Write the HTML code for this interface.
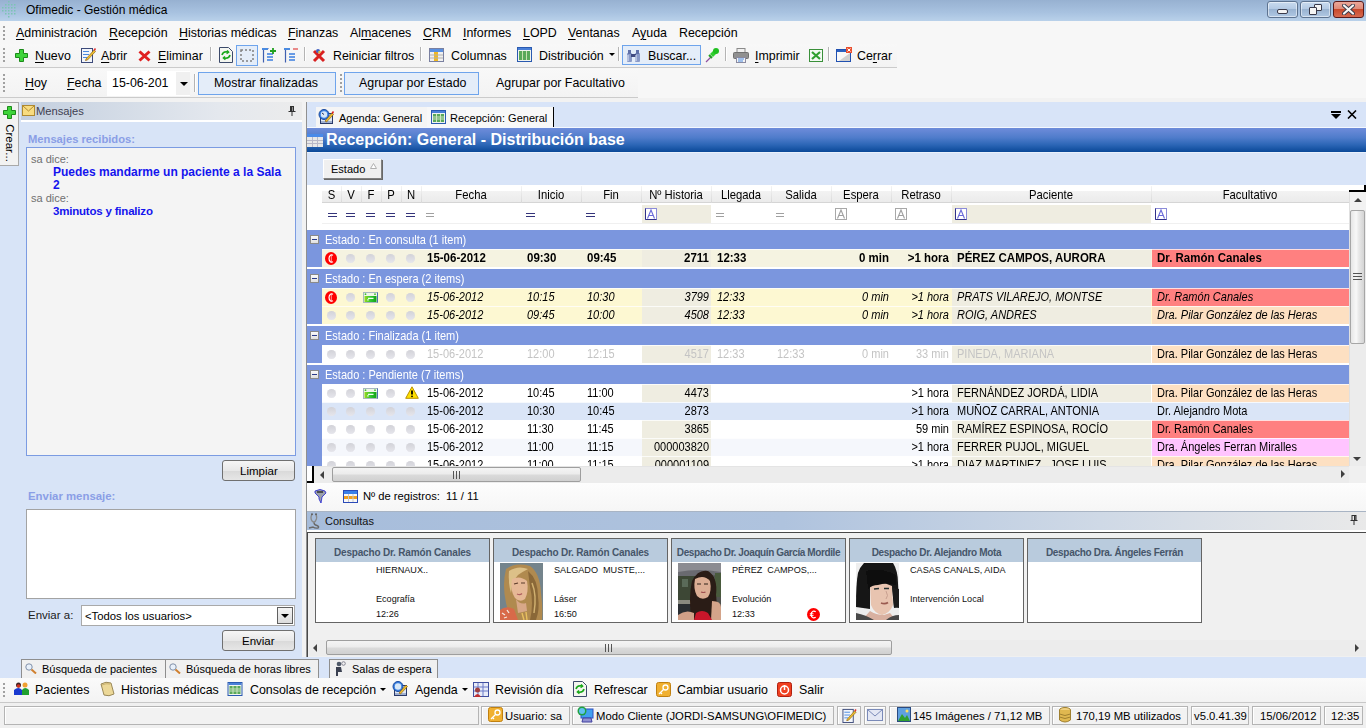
<!DOCTYPE html>
<html><head><meta charset="utf-8">
<style>
*{margin:0;padding:0;box-sizing:border-box}
html,body{width:1366px;height:728px;overflow:hidden;background:#f0f0f0;font-family:"Liberation Sans",sans-serif;font-size:12px;color:#000}
.a{position:absolute}
.t{position:absolute;white-space:nowrap;line-height:14px}
u{text-decoration:underline;text-underline-offset:2px;text-decoration-thickness:1px}
.sep{position:absolute;width:2px;background:linear-gradient(90deg,#b4b4b4 50%,#fff 50%)}
.grip{position:absolute;width:2px;background:repeating-linear-gradient(#a0a0a0 0 2px,transparent 2px 4px)}
.hd{font-size:11.3px;text-align:center;color:#000}
.dot{width:9px;height:9px;border-radius:50%;background:linear-gradient(#d2d2d8,#dcdce2 50%,#e6e6ec);box-shadow:0 0 .6px #dedee4}
.mbox{width:9px;height:9px;background:linear-gradient(#fafafa,#e0e0e0);border:1px solid #8a8a8a}
.mbox:after{content:"";position:absolute;left:1px;top:3px;width:5px;height:1px;background:#2a3a8a}
.grp{font-size:11px;color:#fff}
.rb{font-size:11.5px;font-weight:bold}
.ri{font-size:11px;font-style:italic}
.rg{font-size:11px;color:#c4c4c4}
.rn{font-size:11px}
.ctitle{font-size:10px;font-weight:bold;color:#46566a;letter-spacing:-.15px}
.ctext{font-size:9.1px;color:#101010}
.rn,.ri,.rg,.grp,.hd{transform:scaleY(1.1);transform-origin:0 10.6px}
.rb{transform:scaleY(1.04);transform-origin:0 10.8px}
</style></head>
<body>
<!-- TITLE BAR -->
<div class="a" style="left:0;top:0;width:1366px;height:21px;background:linear-gradient(#97b1d1,#a8c2e0 60%,#b9d1ea)"></div>
<svg class="a" style="left:2px;top:1px" width="16" height="17" viewBox="0 0 16 17"><g fill="#7cc4b4"><rect x="6" y="0" width="1.5" height="1.5"/><rect x="6" y="3" width="1.5" height="1.5"/><rect x="6" y="6" width="1.5" height="1.5"/><rect x="6" y="9" width="1.5" height="1.5"/><rect x="6" y="12" width="1.5" height="1.5"/><rect x="6" y="15" width="1.5" height="1.5"/><rect x="9" y="3" width="1.5" height="1.5"/><rect x="9" y="6" width="1.5" height="1.5"/><rect x="9" y="9" width="1.5" height="1.5"/><rect x="9" y="12" width="1.5" height="1.5"/><rect x="0" y="6" width="1.5" height="1.5"/><rect x="3" y="6" width="1.5" height="1.5"/><rect x="12" y="6" width="1.5" height="1.5"/><rect x="0" y="9" width="1.5" height="1.5"/><rect x="3" y="9" width="1.5" height="1.5"/><rect x="12" y="9" width="1.5" height="1.5"/><rect x="3" y="3" width="1.5" height="1.5"/><rect x="3" y="12" width="1.5" height="1.5"/><rect x="12" y="3" width="1.5" height="1.5"/><rect x="12" y="12" width="1.5" height="1.5"/></g></svg>
<div class="t" style="left:26px;top:3px;font-size:12px;color:#000">Ofimedic - Gestión médica</div>
<div class="a" style="left:1267px;top:1px;width:31px;height:17px;border:1px solid #5d7390;border-radius:3px;background:linear-gradient(#c9dbef 0,#b4cae4 45%,#98b2d0 46%,#b0c8e4 100%);box-shadow:inset 0 0 0 1px rgba(255,255,255,.5)"></div>
<div class="a" style="left:1277px;top:9px;width:11px;height:5px;background:#f4f4f4;border:1px solid #3a3a4a;border-radius:2px"></div>
<div class="a" style="left:1300px;top:1px;width:31px;height:17px;border:1px solid #5d7390;border-radius:3px;background:linear-gradient(#c9dbef 0,#b4cae4 45%,#98b2d0 46%,#b0c8e4 100%);box-shadow:inset 0 0 0 1px rgba(255,255,255,.5)"></div>
<div class="a" style="left:1314px;top:4px;width:8px;height:7px;background:#f4f4f4;border:1.5px solid #3a3a4a;border-radius:1px"></div>
<div class="a" style="left:1309px;top:7px;width:8px;height:8px;background:#f4f4f4;border:1.5px solid #3a3a4a;border-radius:1px"></div>
<div class="a" style="left:1333px;top:1px;width:31px;height:17px;border:1px solid #5a1a1a;border-radius:3px;background:linear-gradient(#eba79a 0,#df8a78 45%,#c8472a 46%,#d66a50 100%)"></div>
<svg class="a" style="left:1342px;top:4px" width="13" height="11" viewBox="0 0 13 11"><path d="M2 1.5 L11 9.5 M11 1.5 L2 9.5" stroke="#3a3a4a" stroke-width="4" stroke-linecap="round"/><path d="M2 1.5 L11 9.5 M11 1.5 L2 9.5" stroke="#f6f6f6" stroke-width="2.2" stroke-linecap="round"/></svg>
<!-- MENU BAR -->
<div class="a" style="left:0;top:21px;width:1366px;height:23px;background:#f7f7f7"></div>
<div class="grip" style="left:3px;top:26px;height:14px"></div>
<div style="position:absolute;left:0;top:26px;font-size:12.4px;white-space:nowrap;line-height:15px">
<span class="t" style="left:16px"><u>A</u>dministración</span>
<span class="t" style="left:109px"><u>R</u>ecepción</span>
<span class="t" style="left:179px"><u>H</u>istorias médicas</span>
<span class="t" style="left:288px"><u>F</u>inanzas</span>
<span class="t" style="left:350px">Al<u>m</u>acenes</span>
<span class="t" style="left:423px"><u>C</u>RM</span>
<span class="t" style="left:463px"><u>I</u>nformes</span>
<span class="t" style="left:523px"><u>L</u>OPD</span>
<span class="t" style="left:568px"><u>V</u>entanas</span>
<span class="t" style="left:632px">A<u>y</u>uda</span>
<span class="t" style="left:679px">Recepción</span>
</div>
<!-- TOOLBAR 1 -->
<div class="a" style="left:0;top:44px;width:1366px;height:54px;background:#f7f7f7"></div>
<div class="a" style="left:0;top:44px;width:897px;height:24px;background:linear-gradient(#f8f8f8,#f3f3f3);border-bottom:1px solid #cbcbcb"></div>
<div class="grip" style="left:3px;top:48px;height:14px"></div>
<div style="position:absolute;left:0;top:49px;font-size:12.4px;line-height:15px">
<span class="t" style="left:35px"><u>N</u>uevo</span>
<span class="t" style="left:101px"><u>A</u>brir</span>
<span class="t" style="left:158px"><u>E</u>liminar</span>
<span class="t" style="left:333px">Reiniciar filtros</span>
<span class="t" style="left:451px">Columnas</span>
<span class="t" style="left:539px">Distribución</span>
<span class="t" style="left:648px">Buscar...</span>
<span class="t" style="left:755px"><u>I</u>mprimir</span>
<span class="t" style="left:857px">Ce<u>r</u>rar</span>
</div>
<svg class="a" style="left:15px;top:49px" width="13" height="13" viewBox="0 0 13 13"><path d="M4.5 .5h4v4h4v4h-4v4h-4v-4h-4v-4h4z" fill="#3ed43a" stroke="#1c8a1a"/></svg>
<svg class="a" style="left:81px;top:47px" width="15" height="16" viewBox="0 0 15 16"><rect x=".5" y="1.5" width="11" height="14" fill="#f2f5fa" stroke="#3c4a7a"/><path d="M2 4.5h6M2 7.5h6M2 10.5h4" stroke="#4a8ae0"/><path d="M5 12 L13 3 L14.5 4.5 L6.5 13 L4.5 13.5z" fill="#f0c030" stroke="#8a6010" stroke-width=".7"/><path d="M12.5 2.5 L14 1 L15 2 L14 4z" fill="#e03030"/></svg>
<svg class="a" style="left:138px;top:50px" width="13" height="12" viewBox="0 0 13 12"><path d="M1.5 1.5 L11.5 10.5 M11.5 1.5 L1.5 10.5" stroke="#e02020" stroke-width="3"/></svg>
<div class="sep" style="left:210px;top:47px;height:14px"></div>
<svg class="a" style="left:219px;top:47px" width="14" height="16" viewBox="0 0 14 16"><path d="M.5 .5h9l4 4v11h-13z" fill="#f4f6f0" stroke="#3c4a6a"/><path d="M3 8 Q4 4 9 5 M8 3.5 L9.5 5.2 L7.5 6.5" stroke="#18a818" stroke-width="1.6" fill="none"/><path d="M11 8 Q10 12 5 11 M6 9.5 L4.5 11 L6.5 12.5" stroke="#18a818" stroke-width="1.6" fill="none"/></svg>
<div class="a" style="left:236px;top:45px;width:22px;height:21px;background:#e4edf9;border:1px solid #6ea4ec"></div>
<svg class="a" style="left:240px;top:49px" width="14" height="13" viewBox="0 0 14 13"><path d="M1 1h12v11h-12z" fill="none" stroke="#808080" stroke-width="1.5" stroke-dasharray="2 2"/></svg>
<svg class="a" style="left:262px;top:47px" width="15" height="16" viewBox="0 0 15 16"><path d="M.5 1.5h6M1.5 1.5v14" stroke="#4060b0" stroke-width="1.2"/><rect x="0" y="1" width="6" height="2" fill="#4a8ae0"/><path d="M5 7h6M5 10h6M5 13h6" stroke="#3a7ee0" stroke-width="1.5"/><path d="M11 1v6M8 4h6" stroke="#20a020" stroke-width="1.8"/></svg>
<svg class="a" style="left:284px;top:47px" width="15" height="16" viewBox="0 0 15 16"><path d="M1.5 1.5v14" stroke="#4060b0" stroke-width="1.2"/><rect x="0" y="1" width="6" height="2" fill="#4a8ae0"/><path d="M5 7h6M5 10h6M5 13h6" stroke="#3a7ee0" stroke-width="1.5"/><path d="M9 2h5" stroke="#e04040" stroke-width="1.2"/></svg>
<div class="sep" style="left:304px;top:47px;height:14px"></div>
<svg class="a" style="left:312px;top:48px" width="14" height="15" viewBox="0 0 14 15"><path d="M2 3 L12 13 M12 3 L2 13" stroke="#d82020" stroke-width="3"/><circle cx="6" cy="3" r="2" fill="#4060c0"/><circle cx="7.5" cy="4" r="1.3" fill="#e0c040"/></svg>
<div class="sep" style="left:420px;top:47px;height:14px"></div>
<svg class="a" style="left:429px;top:48px" width="15" height="14" viewBox="0 0 15 14"><rect x=".5" y=".5" width="14" height="13" fill="#f0f0f0" stroke="#7a80a0"/><rect x="1" y="1" width="13" height="3" fill="#5a90e0"/><rect x="5" y="4" width="4" height="9" fill="#f0b820"/><path d="M1 7h13M1 10h13" stroke="#b0b0b0"/></svg>
<svg class="a" style="left:517px;top:47px" width="15" height="15" viewBox="0 0 15 15"><rect x=".5" y=".5" width="14" height="14" fill="#f0f4f0" stroke="#2a5ab0"/><rect x="1" y="1" width="13" height="2" fill="#4a80d8"/><rect x="2" y="4" width="11" height="9" fill="#5aa85a"/><path d="M5.5 4v9M9.5 4v9" stroke="#c8e0b0"/></svg>
<div class="a" style="left:609px;top:53px;width:0;height:0;border-left:3px solid transparent;border-right:3px solid transparent;border-top:3px solid #000"></div>
<div class="sep" style="left:618px;top:47px;height:14px"></div>
<div class="a" style="left:622px;top:45px;width:79px;height:20px;background:#e4edf9;border:1px solid #6ea4ec"></div>
<span class="t" style="left:648px;top:49px;font-size:12.4px;line-height:15px">Buscar...</span>
<svg class="a" style="left:626px;top:49px" width="15" height="13" viewBox="0 0 15 13"><rect x="1" y="4" width="5" height="9" rx="1" fill="#8a9ac8"/><rect x="9" y="4" width="5" height="9" rx="1" fill="#8a9ac8"/><rect x="2" y="1" width="3" height="4" fill="#6070a8"/><rect x="10" y="1" width="3" height="4" fill="#6070a8"/><rect x="5" y="5" width="5" height="3" fill="#404a80"/><path d="M2 6v6M10 6v6" stroke="#e0e8f8"/></svg>
<svg class="a" style="left:705px;top:47px" width="15" height="16" viewBox="0 0 15 16"><path d="M1 15 L6 10" stroke="#9050a0" stroke-width="1.2"/><path d="M5 7 L10 2 L13 5 L8 10z" fill="#30d030"/><circle cx="11" cy="4" r="3" fill="#20c020"/><path d="M4 8 L7 11" stroke="#20a020" stroke-width="2"/></svg>
<div class="sep" style="left:725px;top:47px;height:14px"></div>
<svg class="a" style="left:733px;top:48px" width="16" height="15" viewBox="0 0 16 15"><rect x="4" y=".5" width="8" height="4" fill="#f0f0f0" stroke="#8a8a8a"/><rect x=".5" y="4.5" width="15" height="6" rx="1" fill="#909090" stroke="#707070"/><rect x="3.5" y="9.5" width="9" height="5" fill="#f4f4f4" stroke="#8a8aa0"/><path d="M5 11h6M5 13h5" stroke="#4a8ae0"/></svg>
<svg class="a" style="left:809px;top:49px" width="14" height="13" viewBox="0 0 14 13"><rect x=".5" y=".5" width="13" height="12" fill="#f4faf4" stroke="#3a903a"/><path d="M3 3 L11 10 M11 3 L3 10" stroke="#30a030" stroke-width="2.2"/></svg>
<div class="sep" style="left:828px;top:47px;height:14px"></div>
<svg class="a" style="left:836px;top:47px" width="16" height="15" viewBox="0 0 16 15"><rect x=".5" y="2.5" width="14" height="12" fill="#f8f8f8" stroke="#2050b0"/><rect x="1" y="3" width="13" height="2" fill="#2a60c0"/><path d="M14 14 L3 14 L14 6z" fill="#d0d0d0"/><rect x="10" y="0" width="6" height="6" fill="#e85030"/><path d="M11.5 1.5l3 3M14.5 1.5l-3 3" stroke="#fff"/></svg>

<!-- TOOLBAR 2 -->
<div class="a" style="left:0;top:69px;width:638px;height:29px;background:linear-gradient(#f8f8f8,#f3f3f3);border-bottom:1px solid #cbcbcb"></div>
<div class="grip" style="left:3px;top:74px;height:18px"></div>
<div style="position:absolute;left:0;top:76px;font-size:12.4px;line-height:15px">
<span class="t" style="left:25px"><u>H</u>oy</span>
<span class="t" style="left:67px"><u>F</u>echa</span>
</div>
<div class="a" style="left:107px;top:71px;width:83px;height:25px;background:#fff"></div>
<div class="a" style="left:176px;top:72px;width:14px;height:23px;background:#f0f0f0"></div>
<span class="t" style="left:112px;top:76px;font-size:12.4px;line-height:15px">15-06-201</span>
<div class="a" style="left:180px;top:82px;width:0;height:0;border-left:4px solid transparent;border-right:4px solid transparent;border-top:4px solid #000"></div>
<div class="sep" style="left:194px;top:74px;height:18px"></div>
<div class="a" style="left:198px;top:72px;width:138px;height:23px;background:#e4edf9;border:1px solid #6ea4ec"></div>
<span class="t" style="left:214px;top:76px;font-size:12.4px;line-height:15px">Mostrar finalizadas</span>
<div class="grip" style="left:340px;top:74px;height:18px"></div>
<div class="a" style="left:344px;top:72px;width:135px;height:23px;background:#e4edf9;border:1px solid #6ea4ec"></div>
<span class="t" style="left:359px;top:76px;font-size:12.4px;line-height:15px">Agrupar por Estado</span>
<span class="t" style="left:496px;top:76px;font-size:12.4px;line-height:15px">Agrupar por Facultativo</span>
<!-- LEFT PANEL -->
<div class="a" style="left:0;top:98px;width:306px;height:4px;background:#f2f2f2"></div>
<div class="a" style="left:0;top:102px;width:302px;height:555px;background:#d8e4f7"></div>
<div class="a" style="left:0;top:102px;width:19px;height:64px;background:#f2f2f2;border:1px solid #a9a9a9;border-left:none"></div>
<svg class="a" style="left:3px;top:106px" width="13" height="13" viewBox="0 0 13 13"><path d="M4.5 .5h4v4h4v4h-4v4h-4v-4h-4v-4h4z" fill="#3ed43a" stroke="#1c8a1a"/></svg>
<div class="t" style="left:-13px;top:136px;font-size:11.5px;transform:rotate(90deg);transform-origin:center;width:46px;text-align:center">Crear...</div>
<div class="a" style="left:21px;top:102px;width:281px;height:18px;background:linear-gradient(90deg,#c3cfdf,#e4e8ee 70%,#ececec)"></div>
<div class="a" style="left:21px;top:120px;width:281px;height:2px;background:#fff"></div>
<svg class="a" style="left:22px;top:105px" width="13" height="11" viewBox="0 0 13 11"><rect x=".5" y=".5" width="12" height="10" fill="#f8dc80" stroke="#b08a30"/><path d="M.5 .5 L6.5 6 L12.5 .5" fill="none" stroke="#b08a30"/></svg>
<div class="t" style="left:36px;top:104px;font-size:11.2px;color:#404050">Mensajes</div>
<svg class="a" style="left:288px;top:106px" width="8" height="10" viewBox="0 0 8 10"><path d="M2 .5h4M2.5 .5v5M5.5 .5v5M.5 5.5h7M4 5.5v4.5" stroke="#303030" fill="none"/><rect x="2.5" y=".5" width="2" height="5" fill="#303030"/></svg>
<div class="a" style="left:302px;top:98px;width:4px;height:559px;background:#f2f2f2"></div>
<div class="a" style="left:306px;top:102px;width:1px;height:555px;background:#909090"></div>
<div class="t" style="left:28px;top:132px;font-size:11.2px;font-weight:bold;color:#8a9ee6">Mensajes recibidos:</div>
<div class="a" style="left:26px;top:147px;width:270px;height:309px;background:#f4f4f4;border:1px solid #7b9be2"></div>
<div class="t" style="left:31px;top:152px;font-size:11px;color:#707070">sa dice:</div>
<div class="a" style="left:53px;top:166px;width:240px;font-size:12px;line-height:13px;font-weight:bold;color:#1414ee;white-space:nowrap">Puedes mandarme un paciente a la Sala<br>2</div>
<div class="t" style="left:31px;top:191px;font-size:11px;color:#707070">sa dice:</div>
<div class="t" style="left:53px;top:204px;font-size:11.5px;font-weight:bold;color:#1414ee;letter-spacing:-.2px">3minutos y finalizo</div>
<div class="a" style="left:222px;top:460px;width:73px;height:21px;border:1px solid #707070;border-radius:3px;background:linear-gradient(#f6f6f6,#e8e8e8 50%,#d9d9d9 51%,#e6e6e6)"></div>
<div class="t" style="left:240px;top:464px;font-size:11.5px">Limpiar</div>
<div class="t" style="left:28px;top:489px;font-size:11.4px;font-weight:bold;color:#8a9ee6">Enviar mensaje:</div>
<div class="a" style="left:26px;top:509px;width:270px;height:90px;background:#fff;border:1px solid #a3a3a3"></div>
<div class="t" style="left:28px;top:608px;font-size:11.5px;color:#202020">Enviar a:</div>
<div class="a" style="left:81px;top:605px;width:214px;height:21px;background:#fff;border:1px solid #a9a9a9"></div>
<div class="t" style="left:85px;top:609px;font-size:11.3px">&lt;Todos los usuarios&gt;</div>
<div class="a" style="left:277px;top:607px;width:16px;height:17px;background:linear-gradient(#f4f4f4,#dcdcdc);border:1px solid #606060"></div>
<div class="a" style="left:281px;top:614px;width:0;height:0;border-left:4px solid transparent;border-right:4px solid transparent;border-top:4px solid #000"></div>
<div class="a" style="left:222px;top:630px;width:73px;height:21px;border:1px solid #707070;border-radius:3px;background:linear-gradient(#f6f6f6,#e8e8e8 50%,#d9d9d9 51%,#e6e6e6)"></div>
<div class="t" style="left:242px;top:634px;font-size:11.5px">Enviar</div>

<!-- MAIN AREA -->
<div class="a" style="left:306px;top:98px;width:1060px;height:4px;background:#f2f2f2"></div>
<div class="a" style="left:307px;top:102px;width:1059px;height:555px;background:#d8e4f8"></div>
<div class="a" style="left:316px;top:107px;width:111px;height:21px;background:#f5f5f5"></div>
<div class="a" style="left:427px;top:107px;width:127px;height:21px;background:#f8f8f8;border-right:1px solid #000"></div>
<svg class="a" style="left:318px;top:109px" width="16" height="16" viewBox="0 0 16 16"><rect x="2.5" y="4.5" width="12" height="10" fill="#e0e8f4" stroke="#2a3a6a"/><rect x="3" y="12" width="11" height="2" fill="#a0b0d0"/><circle cx="6" cy="5.5" r="5" fill="#3a80e0" stroke="#1a4aa0"/><circle cx="6" cy="5.5" r="3.2" fill="#d8e8f8"/><path d="M6 5.5 L4 4" stroke="#203060"/><path d="M7 12 L14 4 L15.5 5.5 L8.5 13z" fill="#f0c030" stroke="#805000" stroke-width=".6"/><path d="M13.5 3.5 L15 2 L16 3 L15 5z" fill="#e02020"/></svg>
<div class="t" style="left:339px;top:111px;font-size:11px">Agenda: General</div>
<svg class="a" style="left:431px;top:110px" width="15" height="14" viewBox="0 0 15 14"><rect x=".5" y=".5" width="14" height="13" fill="#f0f4f0" stroke="#2a5ab0"/><rect x="1" y="1" width="13" height="2" fill="#4a80d8"/><rect x="2" y="4" width="11" height="8" fill="#5aa85a"/><path d="M5.5 4v8M9.5 4v8" stroke="#d0e8c0"/><rect x="2" y="6" width="11" height="4" fill="#c8e0c0" opacity=".5"/></svg>
<div class="t" style="left:450px;top:111px;font-size:11px">Recepción: General</div>
<svg class="a" style="left:1331px;top:111px" width="10" height="8" viewBox="0 0 10 8"><rect x="0" y="0" width="10" height="2" fill="#000"/><path d="M0 3h10L5 8z" fill="#000"/></svg>
<svg class="a" style="left:1347px;top:110px" width="10" height="9" viewBox="0 0 10 9"><path d="M1 .5 L9 8.5 M9 .5 L1 8.5" stroke="#000" stroke-width="1.6"/></svg>
<div class="a" style="left:307px;top:127px;width:1059px;height:1px;background:#f4f8ff"></div>
<div class="a" style="left:307px;top:128px;width:1059px;height:24px;background:linear-gradient(#6e8cda 0%,#4f7ccb 40%,#2c66b6 70%,#0a4898 100%)"></div>
<div class="a" style="left:307px;top:152px;width:1059px;height:1px;background:#e8f0fc"></div>
<svg class="a" style="left:307px;top:134px" width="16" height="13" viewBox="0 0 16 13"><rect x="0" y="0" width="16" height="13" fill="#e8e8e8"/><rect x="0" y="0" width="16" height="3" fill="#4a8ae8"/><path d="M0 6.5h16M0 9.5h16M5.5 3v10M10.5 3v10" stroke="#b8b8c8"/></svg>
<div class="t" style="left:326px;top:131px;font-size:16px;line-height:18px;font-weight:bold;color:#fff">Recepción: General - Distribución base</div>
<div class="a" style="left:323px;top:159px;width:59px;height:20px;background:#f0f0f0;border:1px solid;border-color:#fff #808080 #808080 #fff;box-shadow:1px 1px 0 #686868"></div>
<div class="t" style="left:331px;top:162px;font-size:11px">Estado</div>
<svg class="a" style="left:370px;top:163px" width="7" height="6" viewBox="0 0 7 6"><path d="M3.5 .5 L6.5 5.5 L.5 5.5z" fill="#fff" stroke="#b0b0b0"/></svg>
<!-- GRID -->
<div class="a" style="left:307px;top:185px;width:1042px;height:281px;background:#fff"></div>
<div class="a" style="left:307px;top:185px;width:1042px;height:18px;background:linear-gradient(#fff 0,#fff 33%,#f3f3f3 34%,#ebebeb 100%);border-bottom:1px solid #d5d5d5"></div>
<div class="a" style="left:307px;top:185px;width:15px;height:18px;background:#fff"></div>
<div class="a" style="left:341px;top:186px;width:1px;height:17px;background:linear-gradient(#f4f4f4,#d8d8d8)"></div>
<div class="t hd" style="left:322px;top:188px;width:19px">S</div>
<div class="a" style="left:361px;top:186px;width:1px;height:17px;background:linear-gradient(#f4f4f4,#d8d8d8)"></div>
<div class="t hd" style="left:341px;top:188px;width:20px">V</div>
<div class="a" style="left:381px;top:186px;width:1px;height:17px;background:linear-gradient(#f4f4f4,#d8d8d8)"></div>
<div class="t hd" style="left:361px;top:188px;width:20px">F</div>
<div class="a" style="left:401px;top:186px;width:1px;height:17px;background:linear-gradient(#f4f4f4,#d8d8d8)"></div>
<div class="t hd" style="left:381px;top:188px;width:20px">P</div>
<div class="a" style="left:421px;top:186px;width:1px;height:17px;background:linear-gradient(#f4f4f4,#d8d8d8)"></div>
<div class="t hd" style="left:401px;top:188px;width:20px">N</div>
<div class="a" style="left:521px;top:186px;width:1px;height:17px;background:linear-gradient(#f4f4f4,#d8d8d8)"></div>
<div class="t hd" style="left:421px;top:188px;width:100px">Fecha</div>
<div class="a" style="left:581px;top:186px;width:1px;height:17px;background:linear-gradient(#f4f4f4,#d8d8d8)"></div>
<div class="t hd" style="left:521px;top:188px;width:60px">Inicio</div>
<div class="a" style="left:641px;top:186px;width:1px;height:17px;background:linear-gradient(#f4f4f4,#d8d8d8)"></div>
<div class="t hd" style="left:581px;top:188px;width:60px">Fin</div>
<div class="a" style="left:711px;top:186px;width:1px;height:17px;background:linear-gradient(#f4f4f4,#d8d8d8)"></div>
<div class="t hd" style="left:641px;top:188px;width:70px">Nº Historia</div>
<div class="a" style="left:771px;top:186px;width:1px;height:17px;background:linear-gradient(#f4f4f4,#d8d8d8)"></div>
<div class="t hd" style="left:711px;top:188px;width:60px">Llegada</div>
<div class="a" style="left:831px;top:186px;width:1px;height:17px;background:linear-gradient(#f4f4f4,#d8d8d8)"></div>
<div class="t hd" style="left:771px;top:188px;width:60px">Salida</div>
<div class="a" style="left:891px;top:186px;width:1px;height:17px;background:linear-gradient(#f4f4f4,#d8d8d8)"></div>
<div class="t hd" style="left:831px;top:188px;width:60px">Espera</div>
<div class="a" style="left:951px;top:186px;width:1px;height:17px;background:linear-gradient(#f4f4f4,#d8d8d8)"></div>
<div class="t hd" style="left:891px;top:188px;width:60px">Retraso</div>
<div class="a" style="left:1151px;top:186px;width:1px;height:17px;background:linear-gradient(#f4f4f4,#d8d8d8)"></div>
<div class="t hd" style="left:951px;top:188px;width:200px">Paciente</div>
<div class="a" style="left:1349px;top:186px;width:1px;height:17px;background:linear-gradient(#f4f4f4,#d8d8d8)"></div>
<div class="t hd" style="left:1151px;top:188px;width:198px">Facultativo</div>
<div class="a" style="left:307px;top:204px;width:1042px;height:20px;background:#fff"></div>
<div class="a" style="left:322px;top:223px;width:1027px;height:1px;background:#f0f0f0"></div>
<div class="a" style="left:328px;top:213px;width:9px;height:4px;border-top:1px solid #34347a;border-bottom:1px solid #34347a"></div>
<div class="a" style="left:346px;top:213px;width:9px;height:4px;border-top:1px solid #34347a;border-bottom:1px solid #34347a"></div>
<div class="a" style="left:366px;top:213px;width:9px;height:4px;border-top:1px solid #34347a;border-bottom:1px solid #34347a"></div>
<div class="a" style="left:386px;top:213px;width:9px;height:4px;border-top:1px solid #34347a;border-bottom:1px solid #34347a"></div>
<div class="a" style="left:406px;top:213px;width:9px;height:4px;border-top:1px solid #34347a;border-bottom:1px solid #34347a"></div>
<div class="a" style="left:426px;top:213px;width:8px;height:4px;border-top:1px solid #a0a0a0;border-bottom:1px solid #a0a0a0"></div>
<div class="a" style="left:526px;top:213px;width:9px;height:4px;border-top:1px solid #34347a;border-bottom:1px solid #34347a"></div>
<div class="a" style="left:586px;top:213px;width:9px;height:4px;border-top:1px solid #34347a;border-bottom:1px solid #34347a"></div>
<div class="a" style="left:642px;top:205px;width:69px;height:18px;background:#efede1"></div>
<svg class="a" style="left:645px;top:208px" width="12" height="12" viewBox="0 0 12 12"><rect x=".5" y=".5" width="11" height="11" fill="#fff" stroke="#8c8cd8"/><path d="M.5 .5v11h11" stroke="#30308a" fill="none"/><path d="M2.5 10.5 L6 2 L9.5 10.5 M4 7.5h4" stroke="#6a6ad8" fill="none" stroke-width="1.1"/></svg>
<div class="a" style="left:716px;top:213px;width:8px;height:4px;border-top:1px solid #a0a0a0;border-bottom:1px solid #a0a0a0"></div>
<div class="a" style="left:776px;top:213px;width:8px;height:4px;border-top:1px solid #a0a0a0;border-bottom:1px solid #a0a0a0"></div>
<svg class="a" style="left:835px;top:208px" width="12" height="12" viewBox="0 0 12 12"><rect x=".5" y=".5" width="11" height="11" fill="#fff" stroke="#a8a8a8"/><path d="M2.5 10.5 L6 2 L9.5 10.5 M4 7.5h4" stroke="#a0a0a0" fill="none" stroke-width="1.1"/></svg>
<svg class="a" style="left:895px;top:208px" width="12" height="12" viewBox="0 0 12 12"><rect x=".5" y=".5" width="11" height="11" fill="#fff" stroke="#a8a8a8"/><path d="M2.5 10.5 L6 2 L9.5 10.5 M4 7.5h4" stroke="#a0a0a0" fill="none" stroke-width="1.1"/></svg>
<div class="a" style="left:952px;top:205px;width:199px;height:18px;background:#efede1"></div>
<svg class="a" style="left:955px;top:208px" width="12" height="12" viewBox="0 0 12 12"><rect x=".5" y=".5" width="11" height="11" fill="#fff" stroke="#8c8cd8"/><path d="M.5 .5v11h11" stroke="#30308a" fill="none"/><path d="M2.5 10.5 L6 2 L9.5 10.5 M4 7.5h4" stroke="#6a6ad8" fill="none" stroke-width="1.1"/></svg>
<svg class="a" style="left:1155px;top:208px" width="12" height="12" viewBox="0 0 12 12"><rect x=".5" y=".5" width="11" height="11" fill="#fff" stroke="#8c8cd8"/><path d="M.5 .5v11h11" stroke="#30308a" fill="none"/><path d="M2.5 10.5 L6 2 L9.5 10.5 M4 7.5h4" stroke="#6a6ad8" fill="none" stroke-width="1.1"/></svg>
<div class="a" style="left:307px;top:224px;width:1042px;height:242px;background:#fff"></div>
<div class="a" style="left:307px;top:224px;width:1042px;height:242px;overflow:hidden">
<div class="a" style="left:0;top:6px;width:1042px;height:37px;background:#7b96de"></div>
<div class="a mbox" style="left:3px;top:11px"></div>
<div class="t grp" style="left:18px;top:9px">Estado : En consulta (1 item)</div>
<div class="a" style="left:15px;top:25px;width:1027px;height:18px;background:#f5f3e1"></div>
<div class="a" style="left:15px;top:25px;width:1027px;height:1px;background:rgba(255,255,255,.75);z-index:1"></div>
<div class="a" style="left:335px;top:25px;width:69px;height:18px;background:#efede1"></div>
<div class="a" style="left:645px;top:25px;width:199px;height:18px;background:#efede1"></div>
<div class="a" style="left:845px;top:25px;width:197px;height:18px;background:#ff8080"></div>
<svg class="a" style="left:18px;top:28px" width="12" height="13" viewBox="0 0 12 13"><ellipse cx="6" cy="6.5" rx="6" ry="6.5" fill="#f00"/><path d="M8 3.2 Q6.6 2.4 5.4 3.2 Q4 4.4 4 6.5 Q4 8.6 5.4 9.8 Q6.6 10.6 8 9.8" stroke="#fff" stroke-width="1.2" fill="none"/><path d="M6.3 2.6v7.8" stroke="#ffd8d8" stroke-width=".7"/></svg>
<div class="a dot" style="left:39px;top:29.5px"></div>
<div class="a dot" style="left:59px;top:29.5px"></div>
<div class="a dot" style="left:79px;top:29.5px"></div>
<div class="a dot" style="left:99px;top:29.5px"></div>
<div class="t rb" style="left:120px;top:27px">15-06-2012</div>
<div class="t rb" style="left:220px;top:27px">09:30</div>
<div class="t rb" style="left:280px;top:27px">09:45</div>
<div class="t rb" style="left:334px;top:27px;width:68px;text-align:right">2711</div>
<div class="t rb" style="left:410px;top:27px">12:33</div>
<div class="t rb" style="left:524px;top:27px;width:58px;text-align:right">0 min</div>
<div class="t rb" style="left:584px;top:27px;width:58px;text-align:right">>1 hora</div>
<div class="t rb" style="left:650px;top:27px">PÉREZ CAMPOS, AURORA</div>
<div class="t rb" style="left:850px;top:27px">Dr. Ramón Canales</div>
<div class="a" style="left:0;top:45px;width:1042px;height:55px;background:#7b96de"></div>
<div class="a mbox" style="left:3px;top:50px"></div>
<div class="t grp" style="left:18px;top:48px">Estado : En espera (2 items)</div>
<div class="a" style="left:15px;top:64px;width:1027px;height:18px;background:#fdf8d2"></div>
<div class="a" style="left:15px;top:64px;width:1027px;height:1px;background:rgba(255,255,255,.75);z-index:1"></div>
<div class="a" style="left:335px;top:64px;width:69px;height:18px;background:#efede1"></div>
<div class="a" style="left:645px;top:64px;width:199px;height:18px;background:#efede1"></div>
<div class="a" style="left:845px;top:64px;width:197px;height:18px;background:#ff8080"></div>
<svg class="a" style="left:18px;top:67px" width="12" height="13" viewBox="0 0 12 13"><ellipse cx="6" cy="6.5" rx="6" ry="6.5" fill="#f00"/><path d="M8 3.2 Q6.6 2.4 5.4 3.2 Q4 4.4 4 6.5 Q4 8.6 5.4 9.8 Q6.6 10.6 8 9.8" stroke="#fff" stroke-width="1.2" fill="none"/><path d="M6.3 2.6v7.8" stroke="#ffd8d8" stroke-width=".7"/></svg>
<div class="a dot" style="left:39px;top:68.5px"></div>
<svg class="a" style="left:56px;top:68px" width="15" height="11" viewBox="0 0 15 11"><defs><linearGradient id="cg" x1="0" x2="1"><stop offset="0" stop-color="#9cd820"/><stop offset=".5" stop-color="#30c830"/><stop offset="1" stop-color="#10a018"/></linearGradient></defs><rect x=".5" y=".5" width="14" height="10" fill="#eef6e8" stroke="#a8b8c0"/><path d="M14.5 .5v10" stroke="#4a70b0"/><rect x="1.5" y="4" width="12" height="6" fill="url(#cg)"/><circle cx="2.5" cy="2.2" r=".9" fill="#40c030"/><circle cx="12" cy="2.2" r=".9" fill="#40c030"/><path d="M5 6.3 h5.5 M4.2 7.8 h1.5" stroke="#f0fff0" stroke-width="1.2"/></svg>
<div class="a dot" style="left:79px;top:68.5px"></div>
<div class="a dot" style="left:99px;top:68.5px"></div>
<div class="t ri" style="left:120px;top:66px">15-06-2012</div>
<div class="t ri" style="left:220px;top:66px">10:15</div>
<div class="t ri" style="left:280px;top:66px">10:30</div>
<div class="t ri" style="left:334px;top:66px;width:68px;text-align:right">3799</div>
<div class="t ri" style="left:410px;top:66px">12:33</div>
<div class="t ri" style="left:524px;top:66px;width:58px;text-align:right">0 min</div>
<div class="t ri" style="left:584px;top:66px;width:58px;text-align:right">>1 hora</div>
<div class="t ri" style="left:650px;top:66px">PRATS VILAREJO, MONTSE</div>
<div class="t ri" style="left:850px;top:66px">Dr. Ramón Canales</div>
<div class="a" style="left:15px;top:82px;width:1027px;height:18px;background:#fdf8d2"></div>
<div class="a" style="left:15px;top:82px;width:1027px;height:1px;background:rgba(255,255,255,.75);z-index:1"></div>
<div class="a" style="left:335px;top:82px;width:69px;height:18px;background:#efede1"></div>
<div class="a" style="left:645px;top:82px;width:199px;height:18px;background:#efede1"></div>
<div class="a" style="left:845px;top:82px;width:197px;height:18px;background:#fde0c2"></div>
<div class="a dot" style="left:20px;top:86.5px"></div>
<div class="a dot" style="left:39px;top:86.5px"></div>
<div class="a dot" style="left:59px;top:86.5px"></div>
<div class="a dot" style="left:79px;top:86.5px"></div>
<div class="a dot" style="left:99px;top:86.5px"></div>
<div class="t ri" style="left:120px;top:84px">15-06-2012</div>
<div class="t ri" style="left:220px;top:84px">09:45</div>
<div class="t ri" style="left:280px;top:84px">10:00</div>
<div class="t ri" style="left:334px;top:84px;width:68px;text-align:right">4508</div>
<div class="t ri" style="left:410px;top:84px">12:33</div>
<div class="t ri" style="left:524px;top:84px;width:58px;text-align:right">0 min</div>
<div class="t ri" style="left:584px;top:84px;width:58px;text-align:right">>1 hora</div>
<div class="t ri" style="left:650px;top:84px">ROIG, ANDRES</div>
<div class="t ri" style="left:850px;top:84px">Dra. Pilar González de las Heras</div>
<div class="a" style="left:0;top:102px;width:1042px;height:37px;background:#7b96de"></div>
<div class="a mbox" style="left:3px;top:107px"></div>
<div class="t grp" style="left:18px;top:105px">Estado : Finalizada (1 item)</div>
<div class="a" style="left:15px;top:121px;width:1027px;height:18px;background:#ffffff"></div>
<div class="a" style="left:15px;top:121px;width:1027px;height:1px;background:rgba(255,255,255,.75);z-index:1"></div>
<div class="a" style="left:335px;top:121px;width:69px;height:18px;background:#efede1"></div>
<div class="a" style="left:645px;top:121px;width:199px;height:18px;background:#efede1"></div>
<div class="a" style="left:845px;top:121px;width:197px;height:18px;background:#fde0c2"></div>
<div class="a dot" style="left:20px;top:125.5px"></div>
<div class="a dot" style="left:39px;top:125.5px"></div>
<div class="a dot" style="left:59px;top:125.5px"></div>
<div class="a dot" style="left:79px;top:125.5px"></div>
<div class="a dot" style="left:99px;top:125.5px"></div>
<div class="t rg" style="left:120px;top:123px">15-06-2012</div>
<div class="t rg" style="left:220px;top:123px">12:00</div>
<div class="t rg" style="left:280px;top:123px">12:15</div>
<div class="t rg" style="left:334px;top:123px;width:68px;text-align:right">4517</div>
<div class="t rg" style="left:410px;top:123px">12:33</div>
<div class="t rg" style="left:470px;top:123px">12:33</div>
<div class="t rg" style="left:524px;top:123px;width:58px;text-align:right">0 min</div>
<div class="t rg" style="left:584px;top:123px;width:58px;text-align:right">33 min</div>
<div class="t rg" style="left:650px;top:123px">PINEDA, MARIANA</div>
<div class="t rn" style="left:850px;top:123px">Dra. Pilar González de las Heras</div>
<div class="a" style="left:0;top:141px;width:1042px;height:109px;background:#7b96de"></div>
<div class="a mbox" style="left:3px;top:146px"></div>
<div class="t grp" style="left:18px;top:144px">Estado : Pendiente (7 items)</div>
<div class="a" style="left:15px;top:160px;width:1027px;height:18px;background:#ffffff"></div>
<div class="a" style="left:15px;top:160px;width:1027px;height:1px;background:rgba(255,255,255,.75);z-index:1"></div>
<div class="a" style="left:335px;top:160px;width:69px;height:18px;background:#efede1"></div>
<div class="a" style="left:645px;top:160px;width:199px;height:18px;background:#efede1"></div>
<div class="a" style="left:845px;top:160px;width:197px;height:18px;background:#fde0c2"></div>
<div class="a dot" style="left:20px;top:164.5px"></div>
<div class="a dot" style="left:39px;top:164.5px"></div>
<svg class="a" style="left:56px;top:164px" width="15" height="11" viewBox="0 0 15 11"><defs><linearGradient id="cg" x1="0" x2="1"><stop offset="0" stop-color="#9cd820"/><stop offset=".5" stop-color="#30c830"/><stop offset="1" stop-color="#10a018"/></linearGradient></defs><rect x=".5" y=".5" width="14" height="10" fill="#eef6e8" stroke="#a8b8c0"/><path d="M14.5 .5v10" stroke="#4a70b0"/><rect x="1.5" y="4" width="12" height="6" fill="url(#cg)"/><circle cx="2.5" cy="2.2" r=".9" fill="#40c030"/><circle cx="12" cy="2.2" r=".9" fill="#40c030"/><path d="M5 6.3 h5.5 M4.2 7.8 h1.5" stroke="#f0fff0" stroke-width="1.2"/></svg>
<div class="a dot" style="left:79px;top:164.5px"></div>
<svg class="a" style="left:98px;top:162px" width="14" height="13" viewBox="0 0 14 13"><path d="M7 .8 L13.3 12.3 L.7 12.3z" fill="#ffe000" stroke="#b89000" stroke-linejoin="round"/><path d="M7 4.5v4" stroke="#000" stroke-width="1.8"/><circle cx="7" cy="10.3" r=".9" fill="#000"/></svg>
<div class="t rn" style="left:120px;top:162px">15-06-2012</div>
<div class="t rn" style="left:220px;top:162px">10:45</div>
<div class="t rn" style="left:280px;top:162px">11:00</div>
<div class="t rn" style="left:334px;top:162px;width:68px;text-align:right">4473</div>
<div class="t rn" style="left:584px;top:162px;width:58px;text-align:right">>1 hora</div>
<div class="t rn" style="left:650px;top:162px">FERNÁNDEZ JORDÁ, LIDIA</div>
<div class="t rn" style="left:850px;top:162px">Dra. Pilar González de las Heras</div>
<div class="a" style="left:15px;top:178px;width:1027px;height:18px;background:#dae5f7"></div>
<div class="a" style="left:15px;top:178px;width:1027px;height:1px;background:rgba(255,255,255,.75);z-index:1"></div>
<div class="a dot" style="left:20px;top:182.5px"></div>
<div class="a dot" style="left:39px;top:182.5px"></div>
<div class="a dot" style="left:59px;top:182.5px"></div>
<div class="a dot" style="left:79px;top:182.5px"></div>
<div class="a dot" style="left:99px;top:182.5px"></div>
<div class="t rn" style="left:120px;top:180px">15-06-2012</div>
<div class="t rn" style="left:220px;top:180px">10:30</div>
<div class="t rn" style="left:280px;top:180px">10:45</div>
<div class="t rn" style="left:334px;top:180px;width:68px;text-align:right">2873</div>
<div class="t rn" style="left:584px;top:180px;width:58px;text-align:right">>1 hora</div>
<div class="t rn" style="left:650px;top:180px">MUÑOZ CARRAL, ANTONIA</div>
<div class="t rn" style="left:850px;top:180px">Dr. Alejandro Mota</div>
<div class="a" style="left:15px;top:196px;width:1027px;height:18px;background:#ffffff"></div>
<div class="a" style="left:15px;top:196px;width:1027px;height:1px;background:rgba(255,255,255,.75);z-index:1"></div>
<div class="a" style="left:335px;top:196px;width:69px;height:18px;background:#efede1"></div>
<div class="a" style="left:645px;top:196px;width:199px;height:18px;background:#efede1"></div>
<div class="a" style="left:845px;top:196px;width:197px;height:18px;background:#ff8080"></div>
<div class="a dot" style="left:20px;top:200.5px"></div>
<div class="a dot" style="left:39px;top:200.5px"></div>
<div class="a dot" style="left:59px;top:200.5px"></div>
<div class="a dot" style="left:79px;top:200.5px"></div>
<div class="a dot" style="left:99px;top:200.5px"></div>
<div class="t rn" style="left:120px;top:198px">15-06-2012</div>
<div class="t rn" style="left:220px;top:198px">11:30</div>
<div class="t rn" style="left:280px;top:198px">11:45</div>
<div class="t rn" style="left:334px;top:198px;width:68px;text-align:right">3865</div>
<div class="t rn" style="left:584px;top:198px;width:58px;text-align:right">59 min</div>
<div class="t rn" style="left:650px;top:198px">RAMÍREZ ESPINOSA, ROCÍO</div>
<div class="t rn" style="left:850px;top:198px">Dr. Ramón Canales</div>
<div class="a" style="left:15px;top:214px;width:1027px;height:18px;background:#f5f7fc"></div>
<div class="a" style="left:15px;top:214px;width:1027px;height:1px;background:rgba(255,255,255,.75);z-index:1"></div>
<div class="a" style="left:335px;top:214px;width:69px;height:18px;background:#efede1"></div>
<div class="a" style="left:645px;top:214px;width:199px;height:18px;background:#efede1"></div>
<div class="a" style="left:845px;top:214px;width:197px;height:18px;background:#ffc4ff"></div>
<div class="a dot" style="left:20px;top:218.5px"></div>
<div class="a dot" style="left:39px;top:218.5px"></div>
<div class="a dot" style="left:59px;top:218.5px"></div>
<div class="a dot" style="left:79px;top:218.5px"></div>
<div class="a dot" style="left:99px;top:218.5px"></div>
<div class="t rn" style="left:120px;top:216px">15-06-2012</div>
<div class="t rn" style="left:220px;top:216px">11:00</div>
<div class="t rn" style="left:280px;top:216px">11:15</div>
<div class="t rn" style="left:334px;top:216px;width:68px;text-align:right">000003820</div>
<div class="t rn" style="left:584px;top:216px;width:58px;text-align:right">>1 hora</div>
<div class="t rn" style="left:650px;top:216px">FERRER PUJOL, MIGUEL</div>
<div class="t rn" style="left:850px;top:216px">Dra. Ángeles Ferran Miralles</div>
<div class="a" style="left:15px;top:232px;width:1027px;height:18px;background:#ffffff"></div>
<div class="a" style="left:15px;top:232px;width:1027px;height:1px;background:rgba(255,255,255,.75);z-index:1"></div>
<div class="a" style="left:335px;top:232px;width:69px;height:18px;background:#efede1"></div>
<div class="a" style="left:645px;top:232px;width:199px;height:18px;background:#efede1"></div>
<div class="a" style="left:845px;top:232px;width:197px;height:18px;background:#fde0c2"></div>
<div class="a dot" style="left:20px;top:236.5px"></div>
<div class="a dot" style="left:39px;top:236.5px"></div>
<div class="a dot" style="left:59px;top:236.5px"></div>
<div class="a dot" style="left:79px;top:236.5px"></div>
<div class="a dot" style="left:99px;top:236.5px"></div>
<div class="t rn" style="left:120px;top:234px">15-06-2012</div>
<div class="t rn" style="left:220px;top:234px">11:00</div>
<div class="t rn" style="left:280px;top:234px">11:15</div>
<div class="t rn" style="left:334px;top:234px;width:68px;text-align:right">000001109</div>
<div class="t rn" style="left:584px;top:234px;width:58px;text-align:right">>1 hora</div>
<div class="t rn" style="left:650px;top:234px">DIAZ MARTINEZ , JOSE LUIS</div>
<div class="t rn" style="left:850px;top:234px">Dra. Pilar González de las Heras</div>
</div>
<!-- VSCROLL -->
<div class="a" style="left:1349px;top:185px;width:17px;height:6px;background:#fff"></div>
<div class="a" style="left:1349px;top:191px;width:17px;height:275px;background:#ececec;border-left:1px solid #e0e0e0"></div>
<div class="a" style="left:1349px;top:190px;width:17px;height:2px;background:#000"></div>
<div class="a" style="left:1364px;top:185px;width:2px;height:6px;background:#000"></div>
<div class="a" style="left:1350px;top:192px;width:16px;height:18px;background:#f2f2f2"></div>
<div class="a" style="left:1354px;top:198px;width:0;height:0;border-left:4px solid transparent;border-right:4px solid transparent;border-bottom:4px solid #404040"></div>
<div class="a" style="left:1350px;top:210px;width:15px;height:134px;border:1px solid #a6a6a6;border-radius:2px;background:linear-gradient(90deg,#e6e6e6,#f8f8f8 40%,#e8e8e8 60%,#d4d4d4)"></div>
<div class="a" style="left:1353px;top:273px;width:9px;height:7px;background:repeating-linear-gradient(#555 0 1px,transparent 1px 3px)"></div>
<div class="a" style="left:1353px;top:457px;width:0;height:0;border-left:4px solid transparent;border-right:4px solid transparent;border-top:4px solid #404040"></div>
<!-- HSCROLL -->
<div class="a" style="left:307px;top:466px;width:1059px;height:17px;background:#ececec;border-top:1px solid #e4e4e4"></div>
<div class="a" style="left:307px;top:466px;width:7px;height:17px;background:#fff;border-right:2px solid #000;border-bottom:2px solid #000"></div>
<div class="a" style="left:320px;top:471px;width:0;height:0;border-top:4px solid transparent;border-bottom:4px solid transparent;border-right:4px solid #404040"></div>
<div class="a" style="left:332px;top:467px;width:249px;height:15px;border:1px solid #9e9e9e;border-radius:2px;background:linear-gradient(#f4f4f4,#ececec 45%,#dadada 55%,#d0d0d0)"></div>
<div class="a" style="left:453px;top:471px;width:7px;height:8px;background:repeating-linear-gradient(90deg,#555 0 1px,transparent 1px 3px)"></div>
<div class="a" style="left:1341px;top:470px;width:0;height:0;border-top:4px solid transparent;border-bottom:4px solid transparent;border-left:4px solid #404040"></div>
<div class="a" style="left:1349px;top:466px;width:17px;height:17px;background:#f0f0f0"></div>
<!-- FOOTER -->
<div class="a" style="left:307px;top:483px;width:1059px;height:28px;background:linear-gradient(#fdfdfd,#f6f6f6)"></div>
<svg class="a" style="left:314px;top:489px" width="13" height="15" viewBox="0 0 13 15"><path d="M1 2 Q6 -1 11 2 L12 4 L8 8 L7 14 L5 10 L5 8 L1 4z" fill="#9aa0aa" stroke="#2020d0" stroke-width=".8"/><path d="M3 3h6" stroke="#303030" stroke-width="1.5"/></svg>
<svg class="a" style="left:343px;top:490px" width="15" height="13" viewBox="0 0 15 13"><rect x=".5" y=".5" width="14" height="12" fill="#f8f8f8" stroke="#2a4ab8"/><rect x="1" y="1" width="13" height="3" fill="#3a80e8"/><rect x="1" y="6" width="13" height="3" fill="#f0a020"/><path d="M5.5 4v8M10 4v8" stroke="#c8c8c8"/></svg>
<div class="t" style="left:363px;top:489px;font-size:11.2px">Nº de registros:&nbsp; 11 / 11</div>
<!-- CONSULTAS -->
<div class="a" style="left:307px;top:511px;width:1059px;height:19px;background:linear-gradient(90deg,#a7bddb 0%,#afc3de 45%,#cfd9e6 75%,#e9e9e9 100%);border-top:1px solid #a8b4c4"></div>
<svg class="a" style="left:308px;top:513px" width="12" height="16" viewBox="0 0 12 16"><path d="M4 1 Q2 5 4 8 Q6 10 7.5 8 Q9.5 5 8 1" stroke="#8a8a8a" stroke-width="1.3" fill="none"/><path d="M6 9.5 Q6 12 9 12.5 Q11.5 13.5 10 15 Q7 15.5 5 14 L1 15" stroke="#6a6a6a" stroke-width="1.4" fill="none"/><circle cx="4" cy="1.2" r="1" fill="#606060"/><circle cx="8" cy="1.2" r="1" fill="#606060"/></svg>
<svg class="a" style="left:1350px;top:515px" width="8" height="10" viewBox="0 0 8 10"><path d="M2 .5h4M.5 5.5h7M4 5.5v4.5" stroke="#303030" fill="none"/><rect x="2" y=".5" width="4" height="5" fill="none" stroke="#303030"/><rect x="4" y="1" width="1.5" height="4" fill="#303030"/></svg>
<div class="t" style="left:325px;top:514px;font-size:11px;color:#101010">Consultas</div>
<div class="a" style="left:307px;top:530px;width:1059px;height:127px;background:#f0f0f0"></div>
<div class="a" style="left:307px;top:530px;width:1059px;height:2px;background:#fff"></div>
<div class="a" style="left:307px;top:532px;width:1059px;height:1px;background:#484848"></div>
<div class="a" style="left:307px;top:532px;width:1px;height:125px;background:#484848"></div>
<!-- CARDS -->
<div class="a" style="left:315px;top:538px;width:175px;height:85px;background:#fff;border:1px solid #646464"></div>
<div class="a" style="left:316px;top:539px;width:173px;height:23px;background:#b9cbdd"></div>
<div class="t ctitle" style="left:315px;top:546px;width:175px;text-align:center;letter-spacing:-0.18px">Despacho Dr. Ramón Canales</div>
<div class="t ctext" style="left:376px;top:563px">HIERNAUX..</div>
<div class="t ctext" style="left:376px;top:592px">Ecografía</div>
<div class="t ctext" style="left:376px;top:607px">12:26</div>
<div class="a" style="left:493px;top:538px;width:175px;height:85px;background:#fff;border:1px solid #646464"></div>
<div class="a" style="left:494px;top:539px;width:173px;height:23px;background:#b9cbdd"></div>
<div class="t ctitle" style="left:493px;top:546px;width:175px;text-align:center;letter-spacing:-0.18px">Despacho Dr. Ramón Canales</div>
<svg class="a" style="left:500px;top:563px" width="43" height="57" viewBox="0 0 43 57"><defs><filter id="b1" x="-20%" y="-20%" width="140%" height="140%"><feGaussianBlur stdDeviation="0.7"/></filter></defs><rect width="43" height="57" fill="#74848c"/><g filter="url(#b1)">
<path d="M6 6 Q16 -1 30 3 Q40 10 41 30 Q43 45 42 57 L14 57 Q8 50 6 40 Q2 22 6 6z" fill="#b08a50"/>
<path d="M9 8 Q18 2 28 6 Q22 9 18 12 Q12 18 11 30 Q8 20 9 8z" fill="#dcc088"/>
<path d="M28 8 Q38 16 38 34 Q40 46 36 57 L30 57 Q34 40 30 24z" fill="#8a6838"/>
<path d="M32 20 Q37 32 34 50" stroke="#d0b070" stroke-width="1.5" fill="none"/>
<path d="M12 16 Q20 12 27 18 Q29 28 25 36 Q20 40 15 35 Q10 28 12 16z" fill="#e6b896"/>
<path d="M14 21 l4 -1 M21 20 l4 0" stroke="#5a3a2a" stroke-width="1.1"/>
<path d="M17 31 q3 1.5 5 -0.5" stroke="#b06060" stroke-width="1.2" fill="none"/>
<path d="M16 36 Q20 42 26 40 L27 48 L18 50z" fill="#d8a888"/>
<path d="M0 57 L0 47 Q6 42 14 46 L18 57z" fill="#d86a48"/>
<path d="M2 50 l3 2 M7 47 l2 3 M4 55 l3 -1" stroke="#f4e8e0" stroke-width="1.3"/>
<path d="M22 50 l2 7 M26 49 l1 8" stroke="#e8c060" stroke-width="1.4"/>
</g></svg>
<div class="t ctext" style="left:554px;top:563px">SALGADO&nbsp; MUSTE,...</div>
<div class="t ctext" style="left:554px;top:592px">Láser</div>
<div class="t ctext" style="left:554px;top:607px">16:50</div>
<div class="a" style="left:671px;top:538px;width:175px;height:85px;background:#fff;border:1px solid #646464"></div>
<div class="a" style="left:672px;top:539px;width:173px;height:23px;background:#b9cbdd"></div>
<div class="t ctitle" style="left:671px;top:546px;width:175px;text-align:center;letter-spacing:-0.4px">Despacho Dr. Joaquín García Mordile</div>
<svg class="a" style="left:678px;top:563px" width="43" height="57" viewBox="0 0 43 57"><defs><filter id="b2" x="-20%" y="-20%" width="140%" height="140%"><feGaussianBlur stdDeviation="0.7"/></filter></defs><rect width="43" height="57" fill="#50524e"/><g filter="url(#b2)">
<rect x="0" y="0" width="43" height="9" fill="#8c8c92"/>
<path d="M0 9 Q20 5 43 9 L43 12 L0 14z" fill="#6a6a70"/>
<rect x="0" y="13" width="18" height="24" fill="#3c4634"/>
<rect x="4" y="16" width="6" height="8" fill="#5a6a58"/>
<rect x="37" y="10" width="6" height="24" fill="#4a5a3c"/>
<rect x="0" y="37" width="20" height="4" fill="#8a8a80"/>
<rect x="0" y="41" width="18" height="16" fill="#2c2e30"/>
<path d="M14 57 Q10 36 14 18 Q20 6 30 8 Q40 14 38 32 Q40 46 36 57z" fill="#2a1a12"/>
<path d="M17 16 Q26 11 32 18 Q34 28 30 34 Q24 38 19 33 Q15 26 17 16z" fill="#dcae94"/>
<path d="M19 21 l4 0 M26 21 l4 0" stroke="#302018" stroke-width="1.1"/>
<path d="M23 29 q2.5 1 4.5 0" stroke="#a05050" stroke-width="1.2" fill="none"/>
<path d="M34 38 Q43 38 43 44 L43 57 L33 57z" fill="#d4a48a"/>
<path d="M0 52 Q8 46 16 50 L16 57 L0 57z" fill="#d0a088"/>
<path d="M16 57 L18 50 Q24 46 30 50 L34 57z" fill="#c8182c"/>
</g></svg>
<div class="t ctext" style="left:732px;top:563px">PÉREZ&nbsp; CAMPOS,...</div>
<div class="t ctext" style="left:732px;top:592px">Evolución</div>
<div class="t ctext" style="left:732px;top:607px">12:33</div>
<svg class="a" style="left:807px;top:608px" width="13" height="13" viewBox="0 0 12 12"><circle cx="6" cy="6" r="6" fill="#f00"/><path d="M8 3.4 Q6.8 2.6 5.6 3 Q3.8 3.8 3.8 6 Q3.8 8.2 5.6 9 Q6.8 9.4 8 8.6" stroke="#fff" stroke-width="1.2" fill="none"/><path d="M2.6 5.3h3.4M2.6 6.9h3.4" stroke="#fff" stroke-width=".8"/></svg>
<div class="a" style="left:849px;top:538px;width:175px;height:85px;background:#fff;border:1px solid #646464"></div>
<div class="a" style="left:850px;top:539px;width:173px;height:23px;background:#b9cbdd"></div>
<div class="t ctitle" style="left:849px;top:546px;width:175px;text-align:center;letter-spacing:-0.33px">Despacho Dr. Alejandro Mota</div>
<svg class="a" style="left:856px;top:563px" width="43" height="57" viewBox="0 0 43 57"><defs><filter id="b3" x="-20%" y="-20%" width="140%" height="140%"><feGaussianBlur stdDeviation="0.55"/></filter></defs><rect width="43" height="57" fill="#eeeeee"/><g filter="url(#b3)">
<path d="M8 0 L37 0 Q42 8 42 20 L43 44 L38 45 L36 24 Q24 18 14 22 L14 46 L0 44 Q0 20 2 10 Q4 4 8 0z" fill="#141414"/>
<path d="M14 22 Q24 17 36 23 L37 42 Q34 50 26 52 Q18 50 15 42z" fill="#e8c4b0"/>
<path d="M10 8 Q24 4 40 12 L40 22 Q30 19 22 22 Q16 22 12 26z" fill="#101010"/>
<path d="M18 26 l5 -0.5 M28 25.5 l5 0" stroke="#283030" stroke-width="1.6"/>
<path d="M30 28 Q33 33 30 36" stroke="#c8a090" stroke-width="1" fill="none"/>
<path d="M25 40 q4 1.5 7 -0.5" stroke="#9a5a50" stroke-width="1.8" fill="none"/>
<path d="M36 24 L43 26 L43 45 L38 44z" fill="#1a1a1a"/>
<path d="M14 48 Q20 52 28 52 L34 50 L40 57 L6 57z" fill="#d8b0a0"/>
<path d="M0 57 L0 50 Q10 52 18 57z M30 57 Q36 52 43 52 L43 57z" fill="#484848"/>
</g></svg>
<div class="t ctext" style="left:910px;top:563px">CASAS CANALS, AIDA</div>
<div class="t ctext" style="left:910px;top:592px">Intervención Local</div>
<div class="a" style="left:1027px;top:538px;width:175px;height:85px;background:#fff;border:1px solid #646464"></div>
<div class="a" style="left:1028px;top:539px;width:173px;height:23px;background:#b9cbdd"></div>
<div class="t ctitle" style="left:1027px;top:546px;width:175px;text-align:center;letter-spacing:-0.3px">Despacho Dra. Ángeles Ferrán</div>
<!-- BOTTOM HSCROLL -->
<div class="a" style="left:309px;top:640px;width:1057px;height:16px;background:#ececec"></div>
<div class="a" style="left:313px;top:644px;width:0;height:0;border-top:4px solid transparent;border-bottom:4px solid transparent;border-right:4px solid #404040"></div>
<div class="a" style="left:326px;top:640px;width:566px;height:15px;border:1px solid #9e9e9e;border-radius:2px;background:linear-gradient(#f4f4f4,#ececec 45%,#dadada 55%,#d0d0d0)"></div>
<div class="a" style="left:605px;top:644px;width:7px;height:8px;background:repeating-linear-gradient(90deg,#555 0 1px,transparent 1px 3px)"></div>
<div class="a" style="left:1355px;top:644px;width:0;height:0;border-top:4px solid transparent;border-bottom:4px solid transparent;border-left:4px solid #404040"></div>

<!-- BOTTOM TABS -->
<div class="a" style="left:0;top:657px;width:1366px;height:21px;background:#d8e4f8"></div>
<div class="a" style="left:21px;top:659px;width:145px;height:19px;background:#f0f0f0;border:1px solid #8e8e8e;border-bottom:none"></div>
<div class="a" style="left:165px;top:659px;width:154px;height:19px;background:#f0f0f0;border:1px solid #8e8e8e;border-bottom:none"></div>
<div class="a" style="left:329px;top:659px;width:109px;height:19px;background:#f0f0f0;border:1px solid #8e8e8e;border-bottom:none"></div>
<svg class="a" style="left:25px;top:663px" width="12" height="11" viewBox="0 0 12 11"><circle cx="4" cy="4" r="3.2" fill="#e8f0fa" stroke="#8090a8"/><path d="M6.5 6.5 L11 10.5" stroke="#d08030" stroke-width="2"/></svg>
<svg class="a" style="left:169px;top:663px" width="12" height="11" viewBox="0 0 12 11"><circle cx="4" cy="4" r="3.2" fill="#e8f0fa" stroke="#8090a8"/><path d="M6.5 6.5 L11 10.5" stroke="#d08030" stroke-width="2"/></svg>
<svg class="a" style="left:334px;top:661px" width="12" height="15" viewBox="0 0 12 15"><circle cx="5" cy="3" r="2.3" fill="#505a6a"/><path d="M2 6 h5 l1 5 h-4 v4 h-2z" fill="#3a4050"/><circle cx="9.5" cy="2.5" r="1.8" fill="none" stroke="#707080" stroke-width=".8"/></svg>
<div class="t" style="left:42px;top:662px;font-size:11px">Búsqueda de pacientes</div>
<div class="t" style="left:186px;top:662px;font-size:11px">Búsqueda de horas libres</div>
<div class="t" style="left:352px;top:662px;font-size:11px">Salas de espera</div>
<!-- BOTTOM TOOLBAR -->
<div class="a" style="left:0;top:678px;width:1366px;height:25px;background:linear-gradient(#fafafa,#f3f3f3);border-bottom:1px solid #c8c8c8"></div>
<div class="grip" style="left:3px;top:683px;height:14px"></div>
<div style="position:absolute;left:0;top:683px;font-size:12.4px;line-height:15px">
<span class="t" style="left:35px">Pacientes</span>
<span class="t" style="left:121px">Historias médicas</span>
<span class="t" style="left:250px">Consolas de recepción</span>
<span class="t" style="left:415px">Agenda</span>
<span class="t" style="left:495px">Revisión día</span>
<span class="t" style="left:594px">Refrescar</span>
<span class="t" style="left:677px">Cambiar usuario</span>
<span class="t" style="left:799px">Salir</span>
</div>
<svg class="a" style="left:14px;top:682px" width="16" height="13" viewBox="0 0 16 13"><circle cx="4.5" cy="3" r="2.5" fill="#402020"/><circle cx="11" cy="3" r="2.5" fill="#f0a030"/><path d="M0 13 V8 Q4.5 4 8 8 V13z" fill="#1a3ad0"/><path d="M8 13 V8 Q11 4 15 8 V13z" fill="#20a030"/><circle cx="4.5" cy="4" r="1.8" fill="#d03020"/></svg>
<svg class="a" style="left:100px;top:681px" width="15" height="16" viewBox="0 0 15 16"><path d="M1 3 Q6 0 11 2 L14 13 Q9 16 4 14z" fill="#ecd898" stroke="#9a8858"/><path d="M2 4 Q6 2 10 3" stroke="#c8b070" fill="none"/></svg>
<svg class="a" style="left:227px;top:682px" width="16" height="14" viewBox="0 0 15 14"><rect x=".5" y=".5" width="14" height="13" fill="#f0f4f0" stroke="#2a5ab0"/><rect x="1" y="1" width="13" height="2" fill="#4a80d8"/><rect x="2" y="4" width="11" height="8" fill="#5aa85a"/><path d="M5.5 4v8M9.5 4v8" stroke="#d0e8c0"/><rect x="2" y="6" width="11" height="4" fill="#c8e0c0" opacity=".5"/></svg>
<div class="a" style="left:380px;top:688px;width:0;height:0;border-left:3px solid transparent;border-right:3px solid transparent;border-top:3px solid #000"></div>
<svg class="a" style="left:392px;top:681px" width="16" height="16" viewBox="0 0 16 16"><rect x="2.5" y="4.5" width="12" height="10" fill="#e0e8f4" stroke="#2a3a6a"/><rect x="3" y="12" width="11" height="2" fill="#a0b0d0"/><circle cx="6" cy="5.5" r="5" fill="#3a80e0" stroke="#1a4aa0"/><circle cx="6" cy="5.5" r="3.2" fill="#d8e8f8"/><path d="M7 12 L14 4 L15.5 5.5 L8.5 13z" fill="#f0c030" stroke="#805000" stroke-width=".6"/></svg>
<div class="a" style="left:462px;top:688px;width:0;height:0;border-left:3px solid transparent;border-right:3px solid transparent;border-top:3px solid #000"></div>
<svg class="a" style="left:473px;top:682px" width="16" height="15" viewBox="0 0 16 15"><rect x=".5" y=".5" width="15" height="14" fill="#e8ecf8" stroke="#4050a0"/><path d="M5 1v13M10 1v13M1 5h14M1 9h14" stroke="#6a7ac8"/><circle cx="4.5" cy="8" r="2.5" fill="#a04040"/><path d="M1 15 Q4.5 9 8 15z" fill="#c03030"/></svg>
<svg class="a" style="left:573px;top:681px" width="14" height="16" viewBox="0 0 14 16"><path d="M.5 .5h9l4 4v11h-13z" fill="#f4f6f0" stroke="#3c4a6a"/><path d="M3 8 Q4 4 9 5 M8 3.5 L9.5 5.2 L7.5 6.5" stroke="#18a818" stroke-width="1.6" fill="none"/><path d="M11 8 Q10 12 5 11 M6 9.5 L4.5 11 L6.5 12.5" stroke="#18a818" stroke-width="1.6" fill="none"/></svg>
<svg class="a" style="left:656px;top:682px" width="15" height="15" viewBox="0 0 15 15"><rect x=".5" y=".5" width="14" height="14" rx="2" fill="#f0b030" stroke="#c08010"/><circle cx="9.5" cy="5.5" r="2.5" fill="none" stroke="#fff" stroke-width="1.3"/><path d="M7.5 7.5 L3 12 M4.5 10.5 L6 12" stroke="#fff" stroke-width="1.3"/></svg>
<svg class="a" style="left:777px;top:682px" width="15" height="15" viewBox="0 0 15 15"><rect x=".5" y=".5" width="14" height="14" rx="2" fill="#f04020" stroke="#b02010"/><circle cx="7.5" cy="8" r="4" fill="none" stroke="#fff" stroke-width="1.5"/><path d="M7.5 3v5" stroke="#fff" stroke-width="1.5"/></svg>
<!-- STATUS -->
<div class="a" style="left:0;top:703px;width:1366px;height:25px;background:#f0f0f0"></div>
<div class="a" style="left:4px;top:706px;width:475px;height:19px;border:1px solid #b4b4b4;box-shadow:inset 1px 1px 0 #fff;background:#f2f2f2"></div>
<div class="a" style="left:481px;top:706px;width:89px;height:19px;border:1px solid #b4b4b4;box-shadow:inset 1px 1px 0 #fff;background:#f2f2f2"></div>
<div class="a" style="left:572px;top:706px;width:262px;height:19px;border:1px solid #b4b4b4;box-shadow:inset 1px 1px 0 #fff;background:#f2f2f2"></div>
<div class="a" style="left:837px;top:706px;width:24px;height:19px;border:1px solid #b4b4b4;box-shadow:inset 1px 1px 0 #fff;background:#f2f2f2"></div>
<div class="a" style="left:864px;top:706px;width:22px;height:19px;border:1px solid #b4b4b4;box-shadow:inset 1px 1px 0 #fff;background:#f2f2f2"></div>
<div class="a" style="left:889px;top:706px;width:161px;height:19px;border:1px solid #b4b4b4;box-shadow:inset 1px 1px 0 #fff;background:#f2f2f2"></div>
<div class="a" style="left:1052px;top:706px;width:136px;height:19px;border:1px solid #b4b4b4;box-shadow:inset 1px 1px 0 #fff;background:#f2f2f2"></div>
<div class="a" style="left:1191px;top:706px;width:58px;height:19px;border:1px solid #b4b4b4;box-shadow:inset 1px 1px 0 #fff;background:#f2f2f2"></div>
<div class="a" style="left:1252px;top:706px;width:69px;height:19px;border:1px solid #b4b4b4;box-shadow:inset 1px 1px 0 #fff;background:#f2f2f2"></div>
<div class="a" style="left:1324px;top:706px;width:39px;height:19px;border:1px solid #b4b4b4;box-shadow:inset 1px 1px 0 #fff;background:#f2f2f2"></div>
<svg class="a" style="left:488px;top:707px" width="15" height="15" viewBox="0 0 15 15"><rect x=".5" y=".5" width="14" height="14" rx="2" fill="#f0b030" stroke="#c08010"/><circle cx="9.5" cy="5.5" r="2.5" fill="none" stroke="#fff" stroke-width="1.3"/><path d="M7.5 7.5 L3 12 M4.5 10.5 L6 12" stroke="#fff" stroke-width="1.3"/></svg>
<svg class="a" style="left:577px;top:706px" width="17" height="17" viewBox="0 0 17 17"><rect x="4" y="3" width="12" height="9" fill="#40a0f0" stroke="#3050c0"/><circle cx="5" cy="5" r="4.5" fill="#20a040"/><circle cx="5" cy="5" r="3" fill="#60c0f0"/><path d="M6 12 L14 12 L15 16 L5 16z" fill="#9090d0" stroke="#4040a0"/></svg>
<svg class="a" style="left:842px;top:708px" width="15" height="15" viewBox="0 0 15 16"><rect x=".5" y="1.5" width="11" height="14" fill="#f2f5fa" stroke="#3c4a7a"/><path d="M2 4.5h6M2 7.5h6M2 10.5h4" stroke="#4a8ae0"/><path d="M5 12 L13 3 L14.5 4.5 L6.5 13 L4.5 13.5z" fill="#f0c030" stroke="#8a6010" stroke-width=".7"/><path d="M12.5 2.5 L14 1 L15 2 L14 4z" fill="#e03030"/></svg>
<svg class="a" style="left:867px;top:709px" width="16" height="12" viewBox="0 0 16 12"><rect x=".5" y=".5" width="15" height="11" fill="#e4e8f4" stroke="#7a8ab8"/><path d="M.5 .5 L8 7 L15.5 .5" fill="none" stroke="#7a8ab8"/></svg>
<svg class="a" style="left:897px;top:707px" width="14" height="15" viewBox="0 0 14 15"><rect x=".5" y=".5" width="13" height="14" fill="#60a0e0" stroke="#2a4a80"/><path d="M1 14 L5 7 L8 11 L10 8 L13 14z" fill="#30a030"/><circle cx="10" cy="4" r="1.5" fill="#ffe060"/></svg>
<svg class="a" style="left:1059px;top:707px" width="12" height="16" viewBox="0 0 12 16"><ellipse cx="6" cy="3" rx="5.5" ry="2.5" fill="#f0d080" stroke="#a08030"/><path d="M.5 3v10 Q6 17 11.5 13V3" fill="#e0b850" stroke="#a08030"/><path d="M.5 7 Q6 10 11.5 7M.5 10 Q6 13 11.5 10" stroke="#a08030" fill="none"/></svg>
<div style="position:absolute;left:0;top:709px;font-size:11.3px;line-height:14px">
<span class="t" style="left:505px">Usuario: sa</span>
<span class="t" style="left:596px">Modo Cliente (JORDI-SAMSUNG\OFIMEDIC)</span>
<span class="t" style="left:913px">145 Imágenes / 71,12 MB</span>
<span class="t" style="left:1076px">170,19 MB utilizados</span>
<span class="t" style="left:1194px">v5.0.41.39</span>
<span class="t" style="left:1260px">15/06/2012</span>
<span class="t" style="left:1331px">12:35</span>
</div>
</body></html>
